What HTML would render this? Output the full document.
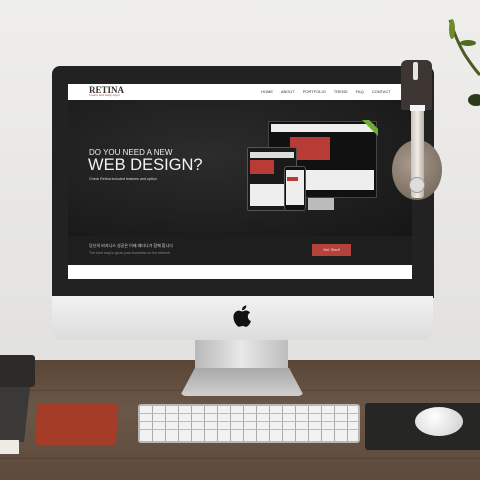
<!DOCTYPE html>
<html><head><style>
*{margin:0;padding:0;box-sizing:border-box}
body{width:480px;height:480px;overflow:hidden;position:relative;background:#e6e5e2;font-family:"Liberation Sans","Noto Sans CJK KR",sans-serif}
.a{position:absolute}
</style></head><body>
<div class="a" style="left:0;top:0;width:480px;height:362px;background:linear-gradient(180deg,#efeeec,#e2e1de)"></div>
<div class="a" style="left:0;top:360px;width:480px;height:120px;background:linear-gradient(180deg,#5a4636,#6b5748 40%,#5e4a3c)"></div>
<div class="a" style="left:0;top:390px;width:480px;height:1px;background:#4e3c2f;opacity:.6"></div>
<div class="a" style="left:0;top:458px;width:480px;height:1px;background:#4e3c2f;opacity:.6"></div>
<svg class="a" style="left:440px;top:15px" width="40" height="95"><path d="M10 5 Q16 25 25 40 Q35 55 40 60" stroke="#4a5a20" stroke-width="3" fill="none"/><ellipse cx="12" cy="14" rx="3" ry="10" fill="#6f8a2a"/><ellipse cx="28" cy="28" rx="8" ry="3" fill="#4f6a22"/><ellipse cx="36" cy="85" rx="8" ry="6" fill="#2a3a18"/></svg>
<div class="a" style="left:195px;top:338px;width:93px;height:35px;background:linear-gradient(90deg,#b8b8b8,#e8e8e8 50%,#bdbdbd)"></div>
<div class="a" style="left:180px;top:368px;width:124px;height:28px;border-radius:0 0 6px 6px;background:linear-gradient(180deg,#a9a9a9,#cfcfcf);clip-path:polygon(12% 0,88% 0,100% 100%,0 100%)"></div>
<div class="a" style="left:52px;top:66px;width:382px;height:232px;background:#222;border-radius:8px 8px 0 0"></div>
<div class="a" style="left:52px;top:296px;width:381px;height:44px;background:linear-gradient(180deg,#f2f2f2,#dcdcdc);border-radius:0 0 9px 9px"></div>
<svg class="a" style="left:233px;top:305px" width="18" height="22" viewBox="0 0 17 20"><path d="M14 10.6c0-2.5 2-3.7 2.1-3.8-1.2-1.7-3-1.9-3.6-2-1.5-.2-3 .9-3.8.9-.8 0-2-.9-3.300-.8C3.700 4.900 2.200 5.900 1.300 7.400c-1.800 3.100-.5 7.700 1.300 10.200.9 1.200 1.900 2.600 3.200 2.600 1.300-.1 1.800-.8 3.300-.8s2 .8 3.300.8c1.400 0 2.300-1.300 3.100-2.500 1-1.400 1.400-2.800 1.400-2.900 0 0-2.800-1.100-2.900-4.200zM11.500 3.200c.7-.9 1.200-2 1-3.200-1 0-2.200.7-3 1.500-.6.700-1.200 1.900-1 3.100 1.100.1 2.300-.6 3-1.400z" fill="#111"/></svg>
<div class="a" style="left:68px;top:84px;width:344px;height:195px;background:#fff"></div>
<div class="a" style="left:68px;top:100px;width:344px;height:136px;background:radial-gradient(ellipse at 40% 40%,#2c2c2c,#161616)"></div>
<div class="a" style="left:68px;top:236px;width:344px;height:29px;background:#1e1e1e"></div>
<div class="a" style="left:89px;top:85px;font-family:'Liberation Serif',serif;font-size:9px;font-weight:bold;color:#333">RETINA</div>
<div class="a" style="left:89px;top:94px;font-size:2.5px;color:#c9442d;white-space:nowrap">Creative Web Design Agent</div>
<div class="a" style="left:261px;top:89px;font-size:4px;color:#333;word-spacing:7px;white-space:nowrap">HOME ABOUT PORTFOLIO TREND FAQ CONTACT</div>
<div class="a" style="left:89px;top:148px;font-size:8px;color:#eee;white-space:nowrap">DO YOU NEED A NEW</div>
<div class="a" style="left:88px;top:156px;font-size:16.5px;color:#f2f2f2;white-space:nowrap">WEB DESIGN?</div>
<div class="a" style="left:89px;top:177px;font-size:3.6px;color:#ddd;white-space:nowrap">Check Retina included features and option</div>
<div class="a" style="left:268px;top:121px;width:109px;height:77px;background:#111;border:1px solid #444"></div>
<div class="a" style="left:271px;top:124px;width:103px;height:8px;background:#eee"></div>
<div class="a" style="left:290px;top:137px;width:40px;height:23px;background:#b83b36"></div>
<div class="a" style="left:271px;top:170px;width:103px;height:20px;background:#eee"></div>
<div class="a" style="left:308px;top:198px;width:26px;height:12px;background:#bbb"></div>
<div class="a" style="left:247px;top:147px;width:50px;height:64px;background:#1a1a1a;border:1px solid #555;border-radius:2px"></div>
<div class="a" style="left:250px;top:152px;width:44px;height:6px;background:#ddd"></div>
<div class="a" style="left:250px;top:160px;width:24px;height:14px;background:#b83b36"></div>
<div class="a" style="left:250px;top:184px;width:44px;height:22px;background:#eee"></div>
<div class="a" style="left:284px;top:166px;width:22px;height:45px;background:#111;border:1px solid #555;border-radius:3px"></div>
<div class="a" style="left:286px;top:170px;width:18px;height:35px;background:#eee"></div>
<div class="a" style="left:287px;top:177px;width:11px;height:4px;background:#b83b36"></div>
<div class="a" style="left:362px;top:120px;width:16px;height:16px;background:#6ab02e;clip-path:polygon(0 0,45% 0,100% 55%,100% 100%)"></div>
<div class="a" style="left:89px;top:243px;font-size:4px;color:#ddd;white-space:nowrap">당신의 비지니스 성공은 이제 레티나가 함께 합니다</div>
<div class="a" style="left:89px;top:251px;font-size:3.6px;color:#888;white-space:nowrap">The best way to grow your business on the internet</div>
<div class="a" style="left:312px;top:244px;width:39px;height:12px;background:#b5413b;color:#f4dcdc;font-size:4px;text-align:center;line-height:12px">Get Start!</div>
<div class="a" style="left:401px;top:60px;width:31px;height:50px;background:#3d3632;border-radius:6px 6px 2px 2px"></div>
<div class="a" style="left:413px;top:62px;width:5px;height:18px;background:#e6e5e2;border-radius:2px"></div>
<div class="a" style="left:392px;top:140px;width:50px;height:60px;border-radius:50%;background:radial-gradient(circle at 40% 40%,#a8998a,#6b5f55)"></div>
<div class="a" style="left:411px;top:108px;width:13px;height:90px;background:linear-gradient(90deg,#c8c2ba,#f0ece6,#b8b0a6);border-radius:3px"></div>
<div class="a" style="left:410px;top:105px;width:15px;height:6px;background:#f4f4f4"></div>
<div class="a" style="left:409px;top:177px;width:16px;height:16px;border-radius:50%;background:#ddd;border:1px solid #999"></div>
<div class="a" style="left:0;top:355px;width:35px;height:32px;background:#2c2b29;border-radius:0 3px 3px 0"></div>
<div class="a" style="left:0;top:387px;width:30px;height:55px;background:#3a3938;clip-path:polygon(0 0,100% 0,80% 100%,0 100%)"></div>
<div class="a" style="left:0;top:440px;width:19px;height:14px;background:#eeeae4"></div>
<div class="a" style="left:36px;top:403px;width:81px;height:42px;background:#a53c28;border-radius:3px;transform:skewX(-3deg)"></div>
<div class="a" style="left:138px;top:404px;width:222px;height:39px;background:repeating-linear-gradient(90deg,#f2f2f2 0 12px,#aaa 12px 13px),#ddd;border:2px solid #b8b8b8;border-radius:3px"></div>
<div class="a" style="left:140px;top:413px;width:218px;height:1px;background:#bbb"></div>
<div class="a" style="left:140px;top:421px;width:218px;height:1px;background:#bbb"></div>
<div class="a" style="left:140px;top:429px;width:218px;height:1px;background:#bbb"></div>
<div class="a" style="left:365px;top:403px;width:115px;height:47px;background:#262624;border-radius:3px 0 0 3px"></div>
<div class="a" style="left:415px;top:407px;width:48px;height:29px;border-radius:50%;background:radial-gradient(circle at 40% 35%,#fff,#ccc)"></div>
</body></html>
